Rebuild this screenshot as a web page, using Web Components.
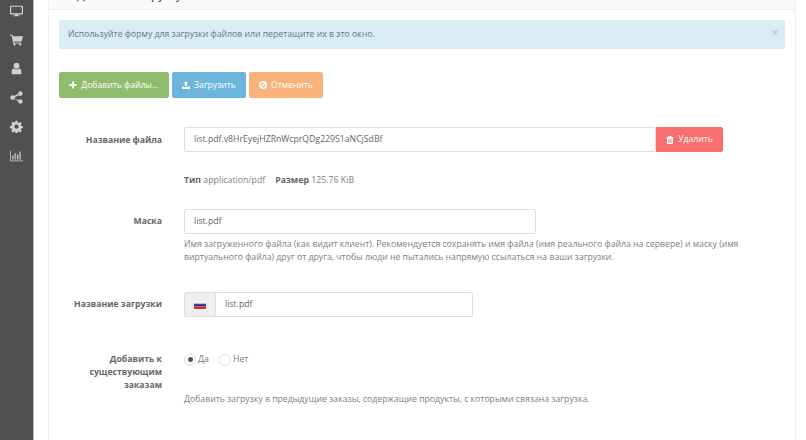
<!doctype html>
<html><head><meta charset="utf-8">
<style>
html,body{margin:0;padding:0;height:440px;overflow:hidden;background:#fff}
body{font:8.7px/13px "Open Sans",sans-serif;color:#666}
</style></head><body>
<template id="t-app"><style>
:host{display:flex;height:440px;overflow:hidden}
.side{width:34px;flex:none;background:#505050;display:flex;flex-direction:column;border-right:1px solid #bbb;box-sizing:border-box}
.main{flex:1;padding:0 10px 0 14px;min-width:0}
</style><nav class="side"><slot name="nav"></slot></nav><main class="main"><slot></slot></main></template>

<template id="t-nav"><style>
:host{display:flex;height:29px;flex:none;align-items:center;justify-content:center;width:100%;color:#cfcfcf}
svg{width:13px;height:13px;fill:currentColor;display:block}
</style><svg viewBox="0 0 16 16"></svg></template>

<template id="t-panel"><style>
:host{display:block;border:1px solid #f0f0f0;border-top:0;height:460px;box-sizing:border-box}
.head{height:9px;background:#fafafa;border-bottom:1px solid #f0f0f0;overflow:hidden;font-size:11px;font-weight:600;color:#555;line-height:14px;padding-left:28px}
.head span{display:block;margin-top:-12px}
.body{padding:10px 10px 0}
</style><div class="head"><span>Добавить загрузку</span></div><div class="body"><slot></slot></div></template>

<template id="t-alert"><style>
:host{display:flex;justify-content:space-between;align-items:center;height:29px;box-sizing:border-box;background:#d9edf5;border-radius:2px;border-bottom:1px solid #d0e9f3;color:#5b7a8c;padding:0 7px 0 9px;font-size:8.700px}
b{font:700 12px/12px "Open Sans",sans-serif;color:#b6cfdc;margin-top:-2px}
</style><span><slot></slot></span><b>×</b></template>

<template id="t-btn"><style>
:host{display:inline-flex;align-items:center;justify-content:center;gap:4px;height:26px;box-sizing:border-box;border-radius:2px;color:#fff;font-size:8.600px;background:var(--c);border:1px solid var(--b,var(--c));white-space:nowrap}
svg{width:8px;height:8px;fill:currentColor;flex:none}
</style><svg viewBox="0 0 16 16"></svg><span><slot></slot></span></template>

<template id="t-row"><style>
:host{display:grid;grid-template-columns:103px 1fr;column-gap:22px;margin-top:var(--mt,0)}
.l{text-align:right;font-weight:700;color:#666;font-size:8.700px;line-height:13px;padding-top:var(--lp,6px);margin-left:-1px}
</style><div class="l"><slot name="label"></slot></div><div><slot></slot></div></template>

<template id="t-input"><style>
:host{display:flex;width:var(--w);height:25px;box-sizing:border-box;align-items:stretch}
.f{flex:1;border:1px solid #dedede;border-radius:2px;display:flex;align-items:center;padding:0 9px;color:#666;font-size:8.700px;min-width:0;background:#fff}
</style><div class="f"><slot></slot></div><slot name="after"></slot></template>

<template id="t-help"><style>
:host{display:block;color:#808080;font-size:8.700px;line-height:13px}
</style><slot></slot></template>

<template id="t-radio"><style>
:host{display:inline-flex;align-items:center;gap:2px;margin-right:10px;font-size:8.800px;line-height:13px;color:#777}
i{width:12px;height:12px;box-sizing:border-box;border:1px solid #dedede;border-radius:50%;display:flex;align-items:center;justify-content:center;background:#fff}
i.on::after{content:"";width:5px;height:5px;background:#555;border-radius:50%}
</style><i></i><span><slot></slot></span></template>

<script>
function def(n,t,fn){customElements.define(n,class extends HTMLElement{constructor(){super();const s=this.attachShadow({mode:'open'});s.appendChild(document.getElementById(t).content.cloneNode(true))}connectedCallback(){fn&&fn(this,this.shadowRoot)}})}
def('x-app','t-app');
def('x-panel','t-panel');
def('x-alert','t-alert');
def('x-row','t-row');
def('x-help','t-help');
def('x-radio','t-radio',(e,s)=>{if(e.hasAttribute('on'))s.querySelector('i').classList.add('on')});
def('x-input','t-input');
const ic={
 monitor:'<path d="M1 2h14a1 1 0 0 1 1 1v9a1 1 0 0 1-1 1h-5v1h2v1H4v-1h2v-1H1a1 1 0 0 1-1-1V3a1 1 0 0 1 1-1zm.5 1.500v8h13v-8z" fill-rule="evenodd"/>',
 cart:'<path d="M0 2h3l.5 2H16l-1.600 6.500H5l.3 1.200H14v1.300H4L2 3.300H0z"/><circle cx="5.500" cy="14.300" r="1.400"/><circle cx="12.500" cy="14.300" r="1.400"/>',
 user:'<circle cx="8" cy="4.600" r="3.600"/><path d="M2 15v-3.600C2 9.500 3.500 8 5 8c1 .8 2 1.200 3 1.200S10 8.800 11 8c1.500 0 3 1.500 3 3.400V15z"/>',
 share:'<circle cx="12.800" cy="3.200" r="2.800"/><circle cx="12.800" cy="12.800" r="2.800"/><circle cx="3.200" cy="8" r="2.800"/><path d="M3 7.200 12.300 2.600l.8 1.400L4 8.800l9.100 3.300-.7 1.500L3 9z"/>',
 gear:'<path fill-rule="evenodd" d="M6.800 1h2.400l.4 2 1.300.6 1.800-1.100 1.700 1.700-1.100 1.800.6 1.300 2 .4v2.400l-2 .4-.6 1.300 1.100 1.800-1.700 1.700-1.800-1.100-1.300.6-.4 2H6.800l-.4-2-1.300-.6-1.800 1.100-1.700-1.700 1.100-1.800-.6-1.300-2-.4V7.300l2-.4.6-1.300-1.100-1.800 1.700-1.700 1.800 1.100 1.300-.6zM8 5.500a2.600 2.600 0 1 0 0 5.200 2.600 2.600 0 0 0 0-5.200z"/>',
 chart:'<path d="M0 2h1v12h15v1H0z"/><path fill="#9ec3e0" d="M2.500 8h2v5h-2z"/><path fill="#d9a0a0" d="M5.500 5h2v8h-2z"/><path fill="#a8d0a8" d="M8.500 7h2v6h-2z"/><path fill="#d9a0a0" d="M11.500 3h2v10h-2z"/>'
};
def('x-nav','t-nav',(e,s)=>{s.querySelector('svg').innerHTML=ic[e.getAttribute('i')]});
const bi={
 plus:'<path d="M6 1h4v5h5v4h-5v5H6v-5H1V6h5z"/>',
 up:'<path d="M8 0l5 5H10v5H6V5H3zM0 11h5v1h6v-1h5v5H0z"/>',
 ban:'<path fill-rule="evenodd" d="M8 0a8 8 0 1 0 0 16A8 8 0 0 0 8 0zM3.500 10.500a5.200 5.200 0 0 1 7-7zM5.500 12.500l7-7a5.200 5.200 0 0 1-7 7z"/>',
 trash:'<path fill-rule="evenodd" d="M5.500 0h5l1 2H15v2h-1v11a1 1 0 0 1-1 1H3a1 1 0 0 1-1-1V4H1V2h3.500zM5 6v8h1.300V6zm2.400 0v8h1.300V6zM9.700 6v8H11V6z"/>'
};
def('x-btn','t-btn',(e,s)=>{s.querySelector('svg').innerHTML=bi[e.getAttribute('i')]});
</script>

<x-app>
 <x-nav slot="nav" i="monitor" style="margin-top:-4.500px"></x-nav>
 <x-nav slot="nav" i="cart"></x-nav>
 <x-nav slot="nav" i="user"></x-nav>
 <x-nav slot="nav" i="share"></x-nav>
 <x-nav slot="nav" i="gear"></x-nav>
 <x-nav slot="nav" i="chart"></x-nav>
 <x-panel>
  <x-alert>Используйте форму для загрузки файлов или перетащите их в это окно.</x-alert>
  <div style="display:flex;gap:3px;margin-top:23px">
   <x-btn i="plus" style="--c:#8fbb6c;width:110px">Добавить файлы...</x-btn>
   <x-btn i="up" style="--c:#6cb5dd;width:74px">Загрузить</x-btn>
   <x-btn i="ban" style="--c:#f9b27a;width:74px">Отменить</x-btn>
  </div>
  <x-row style="--mt:29px;--lp:7px">
   <span slot="label">Название файла</span>
   <x-input style="--w:539px">list.pdf.v8HrEyejHZRnWcprQDg229S1aNCjSdBf
    <x-btn slot="after" i="trash" style="--c:#f96e6e;width:67px;height:25px;border-radius:0 2px 2px 0;flex:none">Удалить</x-btn>
   </x-input>
   <div style="grid-column:2;margin-top:22px;font-size:8.750px;color:#808080;line-height:13px;display:flex;gap:10px">
    <span><b style="color:#666">Тип</b> application/pdf</span><span><b style="color:#666">Размер</b> 125.76 KiB</span>
   </div>
  </x-row>
  <x-row style="--mt:22px">
   <span slot="label">Маска</span>
   <x-input style="--w:352px">list.pdf</x-input>
   <x-help style="grid-column:2;margin-top:4px;width:570px">Имя загруженного файла (как видит клиент). Рекомендуется сохранять имя файла (имя реального файла на сервере) и маску (имя виртуального файла) друг от друга, чтобы люди не пытались напрямую ссылаться на ваши загрузки.</x-help>
  </x-row>
  <x-row style="--mt:28px">
   <span slot="label">Название загрузки</span>
   <div style="display:flex;width:289px;height:25px">
    <div style="width:32px;flex:none;box-sizing:border-box;background:#eee;border:1px solid #dedede;border-radius:2px 0 0 2px;display:flex;align-items:center;justify-content:center">
     <svg width="12" height="8" viewBox="0 0 12 8" style="display:block"><path fill="#f4f4f6" d="M0 0h12v3H0z"/><path fill="#2a3f9e" d="M0 2.700h12v2.600H0z"/><path fill="#d8262c" d="M0 5.300h12V8H0z"/></svg>
    </div>
    <x-input style="--w:258px;margin-left:-1px;flex:1">list.pdf</x-input>
   </div>
  </x-row>
  <x-row style="--mt:36px;--lp:0">
   <span slot="label">Добавить к<br>существующим<br>заказам</span>
   <div>
    <div style="display:flex;align-items:center;height:13px"><x-radio on>Да</x-radio><x-radio>Нет</x-radio></div>
    <x-help style="margin-top:27px">Добавить загрузку в предыдущие заказы, содержащие продукты, с которыми связана загрузка.</x-help>
   </div>
  </x-row>
 </x-panel>
</x-app>
</body></html>
